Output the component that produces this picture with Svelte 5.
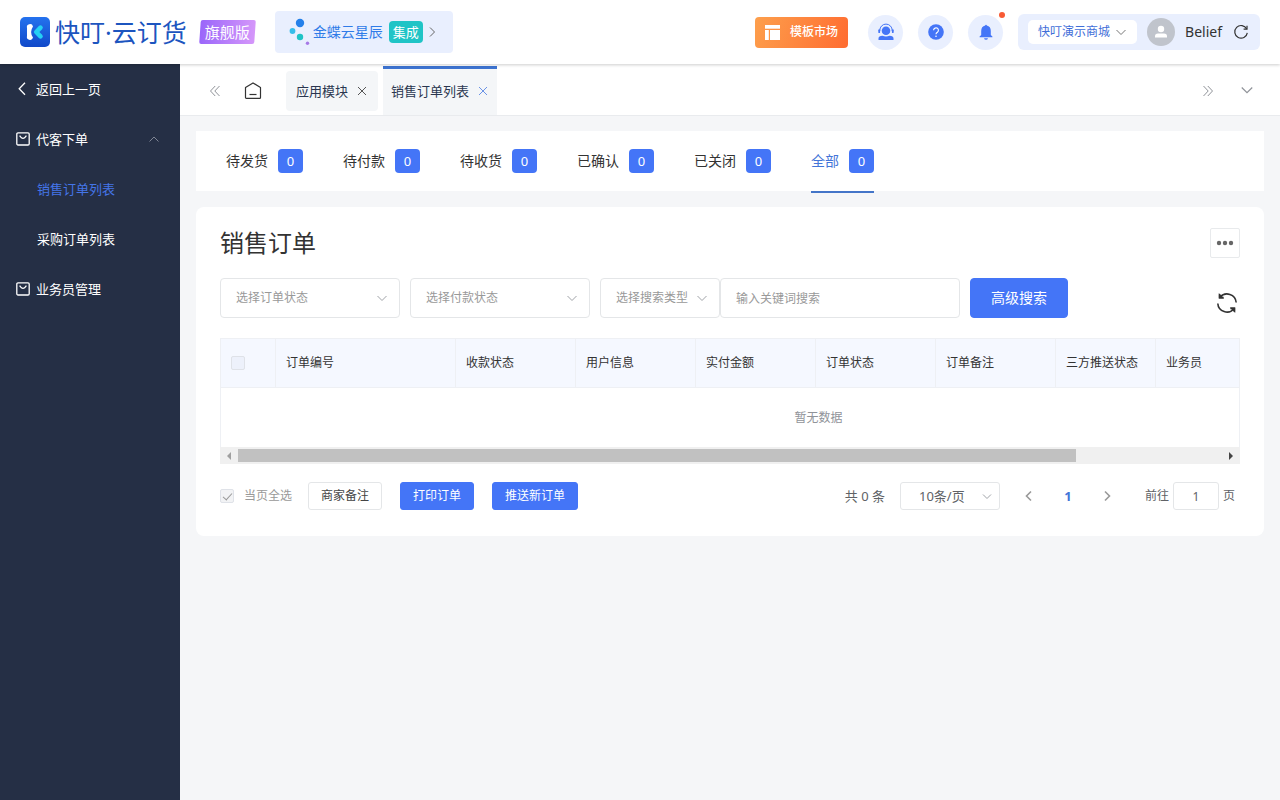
<script lang="ts">
	interface StatusTab {
		label: string;
		count: number;
	}

	interface Column {
		title: string;
		width: number;
	}

	const statusTabs: StatusTab[] = [
		{ label: '待发货', count: 0 },
		{ label: '待付款', count: 0 },
		{ label: '待收货', count: 0 },
		{ label: '已确认', count: 0 },
		{ label: '已关闭', count: 0 },
		{ label: '全部', count: 0 }
	];

	const columns: Column[] = [
		{ title: '订单编号', width: 180 },
		{ title: '收款状态', width: 120 },
		{ title: '用户信息', width: 120 },
		{ title: '实付金额', width: 120 },
		{ title: '订单状态', width: 120 },
		{ title: '订单备注', width: 120 },
		{ title: '三方推送状态', width: 100 },
		{ title: '业务员', width: 260 }
	];

	const checkWidth = 55;
	const tableWidth = columns.reduce((sum, c) => sum + c.width, checkWidth);

	let activeStatus = $state('全部');
	let menuOpen = $state(true);
	let keyword = $state('');
	let jumpPage = $state('1');

	let scroller: HTMLDivElement;
	let viewWidth = $state(0);
	let scrollLeft = $state(0);

	let thumbSize = $derived(Math.min(100, (viewWidth / tableWidth) * 100));
	let thumbOffset = $derived((scrollLeft / tableWidth) * 100);

	function scrollTable(step: number) {
		scroller.scrollLeft += step;
	}
</script>

{#snippet chevron(size: number, d: string)}
	<svg width={size} height={size} viewBox="0 0 12 12" fill="none" stroke="currentColor" aria-hidden="true">
		<path {d} />
	</svg>
{/snippet}

{#snippet bag()}
	<svg width="14" height="14" viewBox="0 0 14 14" fill="none" stroke="currentColor" stroke-width="1.3" aria-hidden="true">
		<rect x="0.8" y="0.8" width="12.4" height="12.2" rx="1.2" />
		<path d="M3.600 3.600 5.400 5.800Q7 7 8.600 5.800L10.400 3.600" />
	</svg>
{/snippet}

<div class="page">
	<header class="header">
		<a class="logo" href="#home">
			<svg width="30" height="30" viewBox="0 0 30 30" aria-hidden="true">
				<defs>
					<linearGradient id="logo-bg" x1="0" y1="0" x2="0" y2="1">
						<stop offset="0" stop-color="#2472ee" />
						<stop offset="1" stop-color="#1149c9" />
					</linearGradient>
				</defs>
				<rect width="30" height="30" rx="5" fill="url(#logo-bg)" />
				<path d="M7 11a3 3 0 0 1 6-1.600q-3.800 5.600 0 11.200A3 3 0 0 1 7 19z" fill="#fff" />
				<path d="M20.500 10.600 16.200 15l4.300 4.400" stroke="#25d0f4" stroke-width="4.600" stroke-linecap="round" stroke-linejoin="round" fill="none" />
			</svg>
			<span>快叮·云订货</span>
		</a>
		<span class="edition">旗舰版</span>

		<a class="integration" href="#integration">
			<svg width="24" height="30" viewBox="0 0 24 30" aria-hidden="true">
				<circle cx="13" cy="6" r="4.200" fill="#2480ea" />
				<circle cx="5.500" cy="14" r="2.900" fill="#36bdea" />
				<circle cx="13" cy="20" r="3.200" fill="#1fc3c6" />
				<circle cx="20.500" cy="26.300" r="1.700" fill="#a679e6" />
			</svg>
			<span>金蝶云星辰</span>
			<span class="integration-tag">集成</span>
			{@render chevron(12, 'M4 1.500 8.500 6 4 10.500')}
		</a>

		<button class="market">
			<svg width="15" height="15" viewBox="0 0 15 15" fill="currentColor" aria-hidden="true">
				<rect width="15" height="3.700" />
				<rect y="5" width="3.800" height="10" />
				<rect x="5" y="5" width="10" height="10" />
			</svg>
			模板市场
		</button>

		<div class="round-actions">
			<button class="round" aria-label="客服">
				<svg width="18" height="18" viewBox="0 0 18 18" aria-hidden="true">
					<path d="M2.800 8V7.300a6.200 6.200 0 0 1 12.400 0v.7" fill="none" stroke="#4475f7" />
					<circle cx="9" cy="7.800" r="4.300" fill="#4475f7" />
					<rect x="1.300" y="6.300" width="1.800" height="3.800" rx=".9" fill="#4475f7" />
					<rect x="14.900" y="6.300" width="1.800" height="3.800" rx=".9" fill="#4475f7" />
					<path d="M1.500 17v-1.600q0-2.400 4-2.600 3.500 1.600 7 0 4 .2 4 2.600V17z" fill="#4475f7" />
				</svg>
			</button>
			<button class="round" aria-label="帮助">
				<svg width="16" height="16" viewBox="0 0 16 16" aria-hidden="true">
					<circle cx="8" cy="8" r="7.800" fill="#4475f7" />
					<path d="M5.600 6.300a2.400 2.400 0 1 1 3.800 1.900Q8 9 8 10.200" fill="none" stroke="#fff" stroke-width="1.100" />
					<circle cx="8" cy="12.200" r=".8" fill="#fff" />
				</svg>
			</button>
			<button class="round has-dot" aria-label="消息">
				<svg width="14" height="16" viewBox="0 0 14 16" fill="#4475f7" aria-hidden="true">
					<path d="M6.200 1.600a.8.800 0 0 1 1.600 0Q11.800 2.600 11.800 7v4l1.600 1.500v.8H.6v-.8L2.200 11V7q0-4.400 4-5.400z" />
					<path d="M5 14.300h4q-.4 1.500-2 1.500t-2-1.500z" />
				</svg>
			</button>
		</div>

		<div class="account">
			<button class="shop">
				快叮演示商城
				{@render chevron(12, 'M1.500 4 6 8.500 10.500 4')}
			</button>
			<span class="avatar">
				<svg width="14" height="14" viewBox="0 0 14 14" fill="#fff" aria-hidden="true">
					<circle cx="7" cy="4" r="3.200" />
					<path d="M1 12.500v-1.300Q1 8.500 4 8.500h6q3 0 3 2.700v1.300z" />
				</svg>
			</span>
			<span class="user">Belief</span>
			<button class="icon-btn dark" aria-label="刷新页面">
				<svg width="16" height="16" viewBox="0 0 16 16" fill="none" stroke="currentColor" stroke-width="1.200" aria-hidden="true">
					<path d="M13.700 5A6.300 6.300 0 1 0 14.300 8.800" />
					<path d="M14 1.800V5.200H10.600" />
				</svg>
			</button>
		</div>
	</header>

	<div class="body">
		<nav class="sidebar">
			<a class="menu-item" href="#back">
				<svg width="14" height="14" viewBox="0 0 14 14" fill="none" stroke="currentColor" stroke-width="1.300" aria-hidden="true">
					<path d="M9 .8 3.200 6.800 9 12.800" />
				</svg>
				返回上一页
			</a>
			<button class="menu-item" aria-expanded={menuOpen} onclick={() => (menuOpen = !menuOpen)}>
				{@render bag()}
				代客下单
				<span class="menu-arrow" class:closed={!menuOpen}>
					{@render chevron(12, 'M1.500 8.500 6 4 10.500 8.500')}
				</span>
			</button>
			{#if menuOpen}
				<a class="menu-item sub active" href="#sales">销售订单列表</a>
				<a class="menu-item sub" href="#purchase">采购订单列表</a>
			{/if}
			<a class="menu-item" href="#staff">
				{@render bag()}
				业务员管理
			</a>
		</nav>

		<div class="content">
			<div class="tabbar">
				<button class="icon-btn first" aria-label="向左滚动">
					<svg width="12" height="12" viewBox="0 0 12 12" fill="none" stroke="currentColor" aria-hidden="true">
						<path d="M6.200 1 1.500 6l4.700 5M10.500 1 5.800 6l4.700 5" />
					</svg>
				</button>
				<button class="icon-btn dark home" aria-label="首页">
					<svg width="18" height="18" viewBox="0 0 18 18" fill="none" stroke="currentColor" stroke-width="1.200" aria-hidden="true">
						<path d="M1.500 5.600 9 .9l7.500 4.700v9.800q0 .9-.9.900H2.400q-.9 0-.9-.9z" stroke-linejoin="round" />
						<path d="M5.500 12.500h7" />
					</svg>
				</button>
				<div class="tab">
					<a href="#modules">应用模块</a>
					<button class="close" aria-label="关闭 应用模块">
						{@render chevron(12, 'M2 2l8 8M10 2l-8 8')}
					</button>
				</div>
				<div class="tab current">
					<a href="#sales">销售订单列表</a>
					<button class="close" aria-label="关闭 销售订单列表">
						{@render chevron(12, 'M2 2l8 8M10 2l-8 8')}
					</button>
				</div>
				<button class="icon-btn last" aria-label="向右滚动">
					<svg width="12" height="12" viewBox="0 0 12 12" fill="none" stroke="currentColor" aria-hidden="true">
						<path d="M1.500 1 6.200 6l-4.700 5M5.800 1l4.700 5-4.700 5" />
					</svg>
				</button>
				<button class="icon-btn" aria-label="更多标签">
					{@render chevron(14, 'M1.500 3 6 7.500 10.500 3')}
				</button>
			</div>

			<main class="main">
				<div class="status-bar">
					{#each statusTabs as tab (tab.label)}
						<button
							class="status-tab"
							class:active={tab.label === activeStatus}
							onclick={() => (activeStatus = tab.label)}
						>
							{tab.label}
							<span class="count">{tab.count}</span>
						</button>
					{/each}
				</div>

				<section class="card">
					<div class="card-head">
						<h1>销售订单</h1>
						<button class="more" aria-label="更多操作">
							<svg width="18" height="6" viewBox="0 0 18 6" fill="currentColor" aria-hidden="true">
								<circle cx="3" cy="3" r="2.200" />
								<circle cx="9" cy="3" r="2.200" />
								<circle cx="15" cy="3" r="2.200" />
							</svg>
						</button>
					</div>

					<div class="filters">
						<div class="select">
							<select aria-label="订单状态">
								<option>选择订单状态</option>
							</select>
							{@render chevron(12, 'M1.500 4 6 8.500 10.500 4')}
						</div>
						<div class="select">
							<select aria-label="付款状态">
								<option>选择付款状态</option>
							</select>
							{@render chevron(12, 'M1.500 4 6 8.500 10.500 4')}
						</div>
						<div class="search">
							<div class="select narrow">
								<select aria-label="搜索类型">
									<option>选择搜索类型</option>
								</select>
								{@render chevron(12, 'M1.500 4 6 8.500 10.500 4')}
							</div>
							<input type="text" aria-label="关键词" placeholder="输入关键词搜索" bind:value={keyword} />
						</div>
						<button class="btn primary large">高级搜索</button>
						<button class="icon-btn dark refresh" aria-label="刷新列表">
							<svg width="22" height="22" viewBox="0 0 22 22" fill="none" stroke="currentColor" stroke-width="1.600" aria-hidden="true">
								<path d="M4 5.200A9.200 9.200 0 0 1 20.200 10.500M18 16.800A9.200 9.200 0 0 1 1.800 11.500" />
								<path d="M3.600 2.200V5.600H7.600M18.400 19.800V16.400H14.400" />
								<path d="M3.600 5.600V3l2.600 2.600zM18.400 16.400V19l-2.600-2.600z" fill="currentColor" />
							</svg>
						</button>
					</div>

					<div
						class="table-wrap"
						bind:this={scroller}
						bind:clientWidth={viewWidth}
						onscroll={() => (scrollLeft = scroller.scrollLeft)}
					>
						<table style="width: {tableWidth}px">
							<colgroup>
								<col style="width: {checkWidth}px" />
								{#each columns as column (column.title)}
									<col style="width: {column.width}px" />
								{/each}
							</colgroup>
							<thead>
								<tr>
									<th><input type="checkbox" aria-label="全选" disabled /></th>
									{#each columns as column (column.title)}
										<th>{column.title}</th>
									{/each}
								</tr>
							</thead>
							<tbody>
								<tr>
									<td class="empty" colspan={columns.length + 1}>暂无数据</td>
								</tr>
							</tbody>
						</table>
					</div>
					<div class="scrollbar">
						<button class="left" aria-label="向左" onclick={() => scrollTable(-60)}></button>
						<div class="track">
							<div class="thumb" style="width: {thumbSize}%; margin-left: {thumbOffset}%"></div>
						</div>
						<button class="right" aria-label="向右" onclick={() => scrollTable(60)}></button>
					</div>

					<div class="card-foot">
						<label class="check-all">
							<input type="checkbox" checked disabled />
							当页全选
						</label>
						<div class="batch">
							<button class="btn">商家备注</button>
							<button class="btn primary">打印订单</button>
							<button class="btn primary">推送新订单</button>
						</div>
						<div class="pagination">
							<span>共 0 条</span>
							<div class="select page-size">
								<select aria-label="每页条数">
									<option>10条/页</option>
								</select>
								{@render chevron(12, 'M2 4.500 6 8.500 10 4.500')}
							</div>
							<div class="pager">
								<button aria-label="上一页">
									<svg width="12" height="12" viewBox="0 0 12 12" fill="none" stroke="currentColor" stroke-width="1.600" aria-hidden="true">
										<path d="M8 1.500 3.500 6 8 10.500" />
									</svg>
								</button>
								<button class="active">1</button>
								<button aria-label="下一页">
									<svg width="12" height="12" viewBox="0 0 12 12" fill="none" stroke="currentColor" stroke-width="1.600" aria-hidden="true">
										<path d="M4 1.500 8.500 6 4 10.500" />
									</svg>
								</button>
							</div>
							<label class="jump">
								前往
								<input type="text" bind:value={jumpPage} />
								页
							</label>
						</div>
					</div>
				</section>
			</main>
		</div>
	</div>
</div>

<style>
	:global(body) {
		background: #f5f6f8;
	}

	.page {
		display: flex;
		flex-direction: column;
		min-height: 100vh;
		font-family: 'Noto Sans', 'Noto Sans CJK SC', sans-serif;
		font-size: 13px;
		line-height: 20px;
		color: #333;
	}

	.page * {
		box-sizing: border-box;
	}

	a {
		color: inherit;
		text-decoration: none;
	}

	button,
	input,
	select {
		margin: 0;
		padding: 0;
		border: 0;
		background: none;
		font: inherit;
		color: inherit;
	}

	button {
		cursor: pointer;
	}

	svg {
		display: block;
		flex: none;
	}

	/* Header */
	.header {
		display: flex;
		align-items: center;
		height: 64px;
		padding: 0 20px;
		background: #fff;
		box-shadow: 0 1px 3px rgba(0, 0, 0, 0.2);
		position: relative;
		z-index: 1;
	}

	.logo {
		display: flex;
		align-items: center;
		gap: 5px;
		font-size: 25px;
		line-height: 30px;
		color: #1c55bf;
		white-space: nowrap;
	}

	.edition {
		position: relative;
		z-index: 0;
		margin-left: 13px;
		padding: 0 5px;
		font-size: 15px;
		line-height: 24px;
		color: #fff;
		white-space: nowrap;
	}

	.edition::before {
		content: '';
		position: absolute;
		inset: 0;
		z-index: -1;
		border-radius: 2px;
		background: linear-gradient(90deg, #9a66fa, #d597fa);
		transform: skewX(-4deg);
	}

	.integration {
		display: flex;
		align-items: center;
		height: 42px;
		margin-left: 20px;
		padding: 0 15px 0 12px;
		border-radius: 4px;
		background: #e9effe;
		font-size: 14px;
		color: #2f7be8;
		white-space: nowrap;
	}

	.integration > :global(svg:last-child) {
		color: #666;
	}

	.integration span {
		margin-left: 2px;
	}

	.integration .integration-tag {
		margin: 0 3px 0 6px;
		padding: 0 4px;
		border-radius: 4px;
		background: #20c4c6;
		font-size: 13px;
		line-height: 22px;
		color: #fff;
	}

	.market {
		display: flex;
		align-items: center;
		gap: 10px;
		height: 31px;
		margin-left: auto;
		padding: 0 10px;
		border-radius: 4px;
		background: linear-gradient(110deg, #fd9f4c, #ff6c31);
		font-size: 12px;
		font-weight: 500;
		color: #fff;
		white-space: nowrap;
	}

	.round-actions {
		display: flex;
		gap: 15px;
		margin: 0 15px 0 20px;
	}

	.round {
		display: flex;
		align-items: center;
		justify-content: center;
		position: relative;
		width: 35px;
		height: 35px;
		border-radius: 50%;
		background: #e9effe;
	}

	.has-dot::after {
		content: '';
		position: absolute;
		top: -3px;
		right: -2px;
		width: 6px;
		height: 6px;
		border-radius: 50%;
		background: #f85a34;
	}

	.account {
		display: flex;
		align-items: center;
		height: 36px;
		padding: 0 11px 0 10px;
		border-radius: 6px;
		background: #e9effe;
	}

	.shop {
		display: flex;
		align-items: center;
		gap: 5px;
		height: 24px;
		padding: 0 10px;
		border-radius: 5px;
		background: #fff;
		font-size: 12px;
		color: #3f6ed8;
		white-space: nowrap;
	}

	.shop > :global(svg) {
		color: #777;
	}

	.avatar {
		display: flex;
		align-items: center;
		justify-content: center;
		width: 28px;
		height: 28px;
		margin: 0 10px;
		border-radius: 50%;
		background: #c0c4cc;
	}

	.user {
		margin-right: 11px;
		font-size: 14px;
	}

	.icon-btn {
		display: flex;
		color: #909399;
	}

	.icon-btn.dark {
		color: #333;
	}

	/* Sidebar */
	.body {
		display: flex;
		flex: 1;
	}

	.sidebar {
		flex: none;
		width: 180px;
		background: #252f45;
		color: #fff;
	}

	.menu-item {
		display: flex;
		align-items: center;
		gap: 6px;
		width: 100%;
		height: 50px;
		padding: 0 20px 0 16px;
	}

	.menu-item.sub {
		padding-left: 37px;
	}

	.menu-item.active {
		color: #4475e8;
	}

	.menu-arrow {
		margin-left: auto;
		color: #7f8594;
	}

	.menu-arrow.closed {
		transform: rotate(180deg);
	}

	/* Tabs */
	.content {
		flex: 1;
		min-width: 0;
	}

	.tabbar {
		display: flex;
		align-items: center;
		height: 52px;
		padding: 2px 26px 0 29px;
		border-bottom: 1px solid #e9ebee;
		background: #fff;
	}

	.home {
		margin: 0 24px 0 23px;
	}

	.tab {
		display: flex;
		align-items: center;
		gap: 8px;
		height: 40px;
		padding: 0 10px;
		border-radius: 4px;
		background: #f4f6f8;
		color: #2a3650;
		white-space: nowrap;
	}

	.tab.current {
		height: 49px;
		margin-left: 5px;
		padding: 0 8px 3px;
		border-top: 3px solid #3d73d0;
		border-radius: 0;
	}

	.close {
		color: #555;
	}

	.current .close {
		color: #6b93e6;
	}

	.icon-btn.last {
		margin: 0 26px 0 auto;
	}

	.main {
		padding: 15px 16px;
	}

	.status-bar {
		display: flex;
		gap: 40px;
		height: 60px;
		margin-bottom: 16px;
		padding: 0 30px;
		background: #fff;
	}

	.status-tab {
		display: flex;
		align-items: center;
		gap: 10px;
		position: relative;
		font-size: 14px;
		white-space: nowrap;
	}

	.status-tab.active {
		color: #4475d8;
	}

	.status-tab.active::after {
		content: '';
		position: absolute;
		left: 0;
		right: 0;
		bottom: -2px;
		height: 2px;
		background: #4475c8;
	}

	.count {
		width: 25px;
		border-radius: 4px;
		background: #4475f7;
		font-size: 13px;
		line-height: 24px;
		text-align: center;
		color: #fff;
	}

	/* Card */
	.card {
		padding: 21px 24px 26px;
		border-radius: 8px;
		background: #fff;
	}

	.card-head {
		display: flex;
		align-items: center;
		justify-content: space-between;
		margin-bottom: 20px;
	}

	h1 {
		margin: 0;
		font-size: 24px;
		font-weight: 400;
		line-height: 30px;
	}

	.more {
		display: flex;
		align-items: center;
		justify-content: center;
		width: 30px;
		height: 30px;
		border: 1px solid #e8eaec;
		border-radius: 2px;
		color: #666;
	}

	.filters {
		display: flex;
		align-items: center;
		gap: 10px;
		margin-bottom: 20px;
		font-size: 12px;
	}

	.select {
		display: grid;
		align-items: center;
		width: 180px;
		color: #999;
	}

	.select select,
	.select > :global(svg) {
		grid-area: 1 / 1;
	}

	.select > :global(svg) {
		justify-self: end;
		margin-right: 12px;
		color: #a0a3a8;
		pointer-events: none;
	}

	.select select {
		appearance: none;
		width: 100%;
		height: 40px;
		padding: 0 28px 0 15px;
		border: 1px solid #e4e6e8;
		border-radius: 4px;
	}

	.select.narrow {
		width: 120px;
	}

	.search {
		display: flex;
	}

	.search input {
		width: 240px;
		height: 40px;
		padding: 0 15px;
		border: 1px solid #e4e6e8;
		border-radius: 4px;
	}

	.search input::placeholder {
		color: #999;
	}

	.btn {
		height: 28px;
		padding: 0 12px;
		border: 1px solid #e4e6e8;
		border-radius: 3px;
		font-size: 12px;
		color: #444;
		white-space: nowrap;
	}

	.btn.primary {
		border-color: #4475f7;
		background: #4475f7;
		color: #fff;
	}

	.btn.large {
		height: 40px;
		padding: 0 20px;
		border-radius: 4px;
		font-size: 14px;
	}

	.refresh {
		align-self: flex-end;
		margin: 0 2px 4px auto;
	}

	.table-wrap {
		overflow-x: auto;
		border: 1px solid #eef0f4;
		border-bottom: 0;
		scrollbar-width: none;
	}

	table {
		border-collapse: separate;
		border-spacing: 0;
		table-layout: fixed;
		font-size: 12px;
	}

	th {
		height: 49px;
		padding: 0 10px;
		border-right: 1px solid #eef0f4;
		border-bottom: 1px solid #eef0f4;
		background: #f5f8ff;
		font-weight: 400;
		text-align: left;
	}

	.empty {
		height: 59px;
		padding: 0;
		text-align: center;
		color: #909399;
	}

	input[type='checkbox'] {
		appearance: none;
		display: block;
		width: 14px;
		height: 14px;
		border: 1px solid #dfe2e8;
		border-radius: 2px;
		background: #edf1fb;
	}

	.check-all input[type='checkbox'] {
		background: #f2f3f5;
	}

	input[type='checkbox']:checked::after {
		content: '';
		display: block;
		width: 8px;
		height: 4px;
		margin: 3px 2px;
		border-left: 1px solid #999;
		border-bottom: 1px solid #999;
		transform: rotate(-48deg);
	}

	.scrollbar {
		display: flex;
		align-items: center;
		height: 17px;
		background: #f0f0f0;
	}

	.scrollbar button {
		display: flex;
		align-items: center;
		justify-content: center;
		width: 18px;
		height: 17px;
	}

	.scrollbar button::before {
		content: '';
		border: 4px solid transparent;
	}

	.scrollbar .left::before {
		border-left-width: 0;
		border-right-color: #a0a0a0;
	}

	.scrollbar .right::before {
		border-right-width: 0;
		border-left-color: #444;
	}

	.track {
		flex: 1;
		overflow: hidden;
	}

	.thumb {
		height: 13px;
		background: #c1c1c1;
	}

	.card-foot {
		display: flex;
		align-items: center;
		margin-top: 18px;
	}

	.check-all {
		display: flex;
		align-items: center;
		gap: 10px;
		font-size: 12px;
		color: #999;
		white-space: nowrap;
	}

	.batch {
		display: flex;
		gap: 18px;
		margin-left: 16px;
	}

	.pagination {
		display: flex;
		align-items: center;
		margin-left: auto;
		padding-right: 5px;
		color: #606266;
		white-space: nowrap;
	}

	.select.page-size {
		width: 100px;
		margin-left: 15px;
		color: #606266;
	}

	.select.page-size select {
		height: 28px;
		padding: 0 24px 0 18px;
		border-radius: 3px;
	}

	.select.page-size > :global(svg) {
		margin-right: 7px;
	}

	.pager {
		display: flex;
		gap: 9px;
		margin: 0 23px 0 14px;
	}

	.pager button {
		display: flex;
		align-items: center;
		justify-content: center;
		width: 30px;
		height: 28px;
		color: #999;
	}

	.pager .active {
		font-weight: 700;
		color: #4475d8;
	}

	.jump {
		display: flex;
		align-items: center;
		gap: 4px;
		font-size: 12px;
	}

	.jump input {
		width: 46px;
		height: 28px;
		border: 1px solid #e4e6e8;
		border-radius: 3px;
		text-align: center;
	}
</style>
